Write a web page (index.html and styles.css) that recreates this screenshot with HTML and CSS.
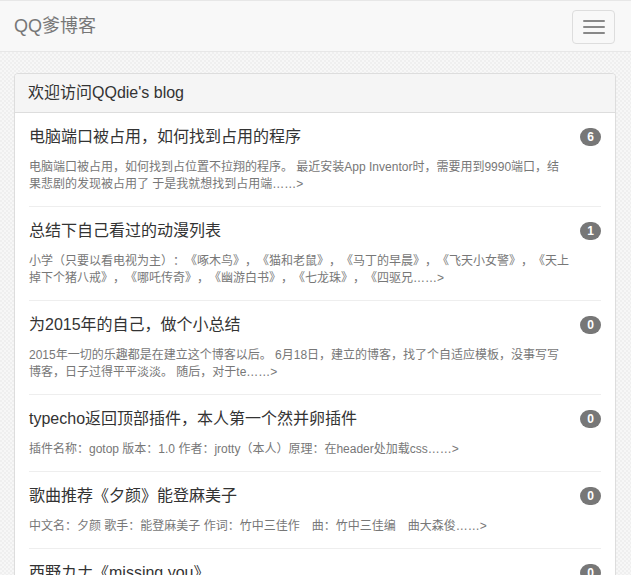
FILE: index.html
```html
<!DOCTYPE html>
<html lang="zh-CN">
<head>
<meta charset="utf-8">
<title>QQ爹博客</title>
<link rel="stylesheet" href="styles.css">
</head>
<body>
<nav class="navbar">
  <a class="brand" href="#">QQ爹博客</a>
  <button class="toggle" type="button" aria-label="menu">
    <span class="bar"></span><span class="bar"></span><span class="bar"></span>
  </button>
</nav>
<main class="container">
  <section class="panel">
    <div class="panel-heading">欢迎访问QQdie's blog</div>
    <ul class="posts">
      <li class="post">
        <div class="post-body">
          <h2 class="post-title">电脑端口被占用，如何找到占用的程序</h2>
          <p class="post-excerpt">电脑端口被占用，如何找到占位置不拉翔的程序。 最近安装App Inventor时，需要用到9990端口，结果悲剧的发现被占用了 于是我就想找到占用端……&gt;</p>
        </div>
        <span class="badge">6</span>
      </li>
      <li class="post">
        <div class="post-body">
          <h2 class="post-title">总结下自己看过的动漫列表</h2>
          <p class="post-excerpt">小学（只要以看电视为主）：《啄木鸟》，《猫和老鼠》，《马丁的早晨》，《飞天小女警》，《天上掉下个猪八戒》，《哪吒传奇》，《幽游白书》，《七龙珠》，《四驱兄……&gt;</p>
        </div>
        <span class="badge">1</span>
      </li>
      <li class="post">
        <div class="post-body">
          <h2 class="post-title">为2015年的自己，做个小总结</h2>
          <p class="post-excerpt">2015年一切的乐趣都是在建立这个博客以后。 6月18日，建立的博客，找了个自适应模板，没事写写博客，日子过得平平淡淡。 随后，对于te……&gt;</p>
        </div>
        <span class="badge">0</span>
      </li>
      <li class="post">
        <div class="post-body">
          <h2 class="post-title">typecho返回顶部插件，本人第一个然并卵插件</h2>
          <p class="post-excerpt">插件名称：gotop 版本：1.0 作者：jrotty（本人）原理：在header处加载css……&gt;</p>
        </div>
        <span class="badge">0</span>
      </li>
      <li class="post">
        <div class="post-body">
          <h2 class="post-title">歌曲推荐《夕颜》能登麻美子</h2>
          <p class="post-excerpt">中文名：夕颜 歌手：能登麻美子 作词：竹中三佳作　曲：竹中三佳编　曲大森俊……&gt;</p>
        </div>
        <span class="badge">0</span>
      </li>
      <li class="post">
        <div class="post-body">
          <h2 class="post-title">西野カナ《missing you》</h2>
          <p class="post-excerpt">西野カナ的一首歌曲，歌名《missing you》……&gt;</p>
        </div>
        <span class="badge">0</span>
      </li>
    </ul>
  </section>
</main>
</body>
</html>
```
FILE: styles.css
```css
html, body {
  margin: 0;
  padding: 0;
}
body {
  font-family: "Liberation Sans", Arial, "Noto Sans CJK SC", sans-serif;
  color: #333;
  background-color: #f4f4f4;
  background-image: repeating-conic-gradient(#f7f7f7 0 25%, #efefef 0 50%);
  background-size: 4px 4px;
  overflow: hidden;
  text-spacing-trim: space-all;
}
.navbar {
  height: 50px;
  background: #f8f8f8;
  border: 1px solid #e7e7e7;
  border-left: 0;
  border-right: 0;
  display: flex;
  align-items: flex-start;
  justify-content: space-between;
}
.brand {
  display: block;
  padding: 15px 14px;
  font-size: 18px;
  line-height: 20px;
  color: #777;
  text-decoration: none;
}
.toggle {
  margin: 9px 16px 0 0;
  width: 43px;
  height: 34px;
  padding: 0;
  background: transparent;
  border: 1px solid #ddd;
  border-radius: 4px;
  display: flex;
  flex-direction: column;
  align-items: center;
  justify-content: center;
  gap: 4px;
}
.bar {
  display: block;
  width: 22px;
  height: 2px;
  border-radius: 1px;
  background: #888;
}
.container {
  padding: 21px 15px 0 14px;
}
.panel {
  background: #fff;
  border: 1px solid #ddd;
  border-radius: 4px;
  box-shadow: 0 1px 1px rgba(0,0,0,0.05);
}
.panel-heading {
  background: #f5f5f5;
  border-bottom: 1px solid #ddd;
  border-radius: 3px 3px 0 0;
  padding: 10px 13px;
  font-size: 16px;
  line-height: 18px;
  color: #333;
}
.posts {
  list-style: none;
  margin: 0;
  padding: 0 14px;
}
.post {
  display: flex;
  align-items: flex-start;
  gap: 10px;
  padding: 13px 0 13px 0;
  border-bottom: 1px solid #eee;
}
.post-body {
  flex: 1;
  min-width: 0;
}
.post-title {
  margin: 0 0 11px;
  font-size: 16px;
  line-height: 22px;
  font-weight: normal;
  color: #333;
}
.post-excerpt {
  margin: 0;
  font-size: 12px;
  line-height: 17px;
  color: #777;
}
.badge {
  flex-shrink: 0;
  margin-top: 2px;
  min-width: 7px;
  padding: 3px 7px;
  border-radius: 10px;
  background: #777;
  color: #fff;
  font-size: 12px;
  font-weight: bold;
  line-height: 12px;
  text-align: center;
}
```
